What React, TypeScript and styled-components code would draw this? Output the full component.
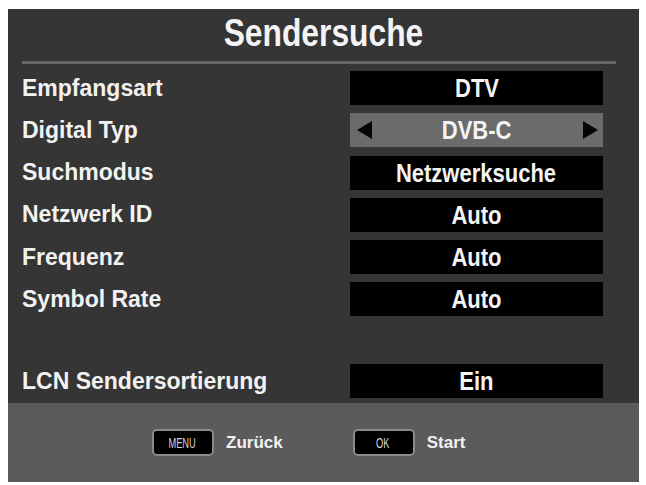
import { createGlobalStyle, styled } from "styled-components";

const GlobalStyle = createGlobalStyle`
  html, body {
    margin: 0;
    padding: 0;
    background: #ffffff;
  }
  body {
    font-family: "Liberation Sans", Arial, sans-serif;
  }
`;

type Row = { label: string; value: string; active?: boolean; spacer?: boolean };

const rows: Row[] = [
  { label: "Empfangsart", value: "DTV" },
  { label: "Digital Typ", value: "DVB-C", active: true },
  { label: "Suchmodus", value: "Netzwerksuche" },
  { label: "Netzwerk ID", value: "Auto" },
  { label: "Frequenz", value: "Auto" },
  { label: "Symbol Rate", value: "Auto" },
  { label: "", value: "", spacer: true },
  { label: "LCN Sendersortierung", value: "Ein" },
];

const App = () => {
  return (
    <>
      <GlobalStyle />
      <Page>
        <Panel>
          <Header>
            <Title>Sendersuche</Title>
          </Header>
          <Divider />
          <List>
            {rows.map((row, i) =>
              row.spacer ? (
                <SpacerRow key={i} />
              ) : (
                <ItemRow key={i}>
                  <Label>{row.label}</Label>
                  <ValueBox $active={row.active}>
                    {row.active && <Arrow $dir="left" />}
                    <ValueText>{row.value}</ValueText>
                    {row.active && <Arrow $dir="right" />}
                  </ValueBox>
                </ItemRow>
              )
            )}
          </List>
          <Footer>
            <Hint>
              <Key>
                <KeyText>MENU</KeyText>
              </Key>
              <HintText>Zurück</HintText>
            </Hint>
            <Hint>
              <Key>
                <KeyText>OK</KeyText>
              </Key>
              <HintText>Start</HintText>
            </Hint>
          </Footer>
        </Panel>
      </Page>
    </>
  );
};

const Page = styled.div`
  width: 646px;
  height: 485px;
  padding: 9px 7px 3px 8px;
  box-sizing: border-box;
`;

const Panel = styled.div`
  width: 631px;
  height: 473px;
  background: #353535;
  display: flex;
  flex-direction: column;
`;

const Header = styled.div`
  height: 46px;
  padding-top: 1px;
  display: flex;
  justify-content: center;
  align-items: center;
`;

const Title = styled.h1`
  margin: 0;
  font-family: "Liberation Sans", Arial, sans-serif;
  font-weight: 700;
  font-size: 39px;
  line-height: 46px;
  color: #f4f4f4;
  transform: scaleX(0.815);
`;

const Divider = styled.div`
  height: 3px;
  margin: 5px 23px 0 14px;
  background: #666666;
`;

const List = styled.div`
  display: flex;
  flex-direction: column;
  gap: 8.3px;
  padding: 7px 36px 0 14px;
  flex: 1;
`;

const ItemRow = styled.div`
  display: flex;
  align-items: center;
  justify-content: space-between;
  height: 34px;
`;

const SpacerRow = styled.div`
  height: 31px;
`;

const Label = styled.div`
  font-weight: 700;
  font-size: 23px;
  color: #f2f2f2;
  white-space: nowrap;
`;

const ValueBox = styled.div<{ $active?: boolean }>`
  position: relative;
  width: 253px;
  height: 34px;
  background: ${(p) => (p.$active ? "#6b6b6b" : "#000000")};
  display: flex;
  align-items: center;
  justify-content: center;
`;

const ValueText = styled.span`
  color: #f4f4f4;
  font-weight: 700;
  font-size: 25px;
  line-height: 34px;
  white-space: nowrap;
  transform: scaleX(0.88);
`;

const Arrow = styled.div<{ $dir: "left" | "right" }>`
  position: absolute;
  top: 8px;
  ${(p) => (p.$dir === "left" ? "left: 7px;" : "right: 5px;")}
  width: 0;
  height: 0;
  border-top: 9px solid transparent;
  border-bottom: 9px solid transparent;
  ${(p) =>
    p.$dir === "left"
      ? "border-right: 15px solid #050505;"
      : "border-left: 15px solid #050505;"}
`;

const Footer = styled.div`
  height: 79px;
  background: #5b5b5b;
  display: flex;
  align-items: center;
  gap: 70px;
  padding-left: 144px;
  box-sizing: border-box;
`;

const Hint = styled.div`
  display: flex;
  align-items: center;
  gap: 12px;
`;

const Key = styled.div`
  width: 62px;
  height: 27px;
  box-sizing: border-box;
  border: 2px solid #8a8a8a;
  border-radius: 5px;
  background: #000000;
  display: flex;
  align-items: center;
  justify-content: center;
`;

const KeyText = styled.span`
  color: #d4d4d4;
  font-family: "Liberation Sans", Arial, sans-serif;
  font-size: 15px;
  line-height: 15px;
  transform: scaleX(0.62);
  margin-left: -2px;
`;

const HintText = styled.div`
  font-weight: 700;
  font-size: 17px;
  color: #f2f2f2;
`;

export default App;
